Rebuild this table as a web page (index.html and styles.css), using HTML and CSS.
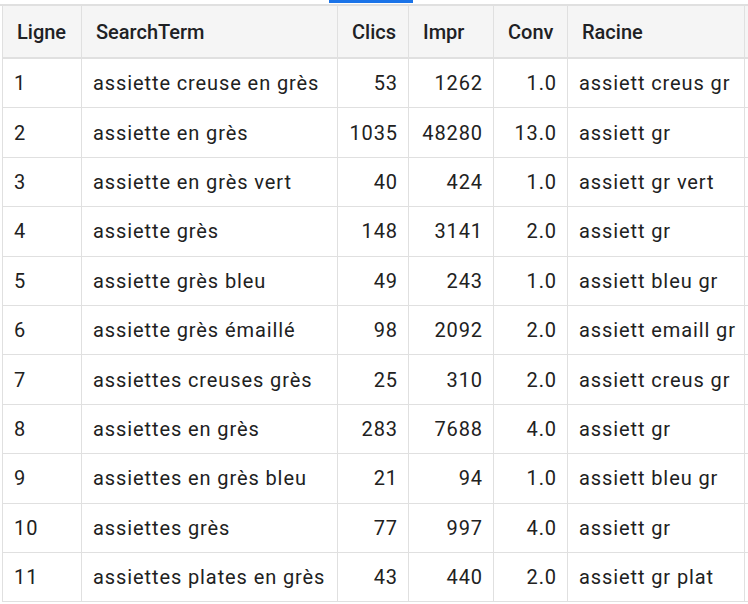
FILE: index.html
```html
<!DOCTYPE html>
<html lang="fr">
<head>
<meta charset="utf-8">
<link rel="stylesheet" href="styles.css">
</head>
<body>
<div class="tabs">
  <div class="tab-indicator"></div>
</div>
<div class="tabline"></div>
<table class="grid">
  <colgroup>
    <col class="c-ligne"><col class="c-term"><col class="c-clics"><col class="c-impr"><col class="c-conv"><col class="c-racine"><col class="c-extra">
  </colgroup>
  <thead>
    <tr><th>Ligne</th><th>SearchTerm</th><th>Clics</th><th>Impr</th><th>Conv</th><th>Racine</th><th></th></tr>
  </thead>
  <tbody>
    <tr><td>1</td><td>assiette creuse en grès</td><td class="num">53</td><td class="num">1262</td><td class="num">1.0</td><td>assiett creus gr</td><td></td></tr>
    <tr><td>2</td><td>assiette en grès</td><td class="num">1035</td><td class="num">48280</td><td class="num">13.0</td><td>assiett gr</td><td></td></tr>
    <tr><td>3</td><td>assiette en grès vert</td><td class="num">40</td><td class="num">424</td><td class="num">1.0</td><td>assiett gr vert</td><td></td></tr>
    <tr><td>4</td><td>assiette grès</td><td class="num">148</td><td class="num">3141</td><td class="num">2.0</td><td>assiett gr</td><td></td></tr>
    <tr><td>5</td><td>assiette grès bleu</td><td class="num">49</td><td class="num">243</td><td class="num">1.0</td><td>assiett bleu gr</td><td></td></tr>
    <tr><td>6</td><td>assiette grès émaillé</td><td class="num">98</td><td class="num">2092</td><td class="num">2.0</td><td>assiett emaill gr</td><td></td></tr>
    <tr><td>7</td><td>assiettes creuses grès</td><td class="num">25</td><td class="num">310</td><td class="num">2.0</td><td>assiett creus gr</td><td></td></tr>
    <tr><td>8</td><td>assiettes en grès</td><td class="num">283</td><td class="num">7688</td><td class="num">4.0</td><td>assiett gr</td><td></td></tr>
    <tr><td>9</td><td>assiettes en grès bleu</td><td class="num">21</td><td class="num">94</td><td class="num">1.0</td><td>assiett bleu gr</td><td></td></tr>
    <tr><td>10</td><td>assiettes grès</td><td class="num">77</td><td class="num">997</td><td class="num">4.0</td><td>assiett gr</td><td></td></tr>
    <tr><td>11</td><td>assiettes plates en grès</td><td class="num">43</td><td class="num">440</td><td class="num">2.0</td><td>assiett gr plat</td><td></td></tr>
  </tbody>
</table>
</body>
</html>
```
FILE: styles.css
```css
html, body {
  margin: 0;
  padding: 0;
  background: #ffffff;
  overflow: hidden;
}
body {
  font-family: Roboto, "Liberation Sans", Arial, sans-serif;
  color: #212121;
  width: 748px;
  height: 604px;
}
.tabs {
  height: 4px;
  display: flex;
}
.tab-indicator {
  margin-left: 329px;
  width: 84px;
  height: 3px;
  background: #1a73e8;
}
.tabline {
  height: 2px;
  background: #e0e0e0;
}
.grid {
  margin-left: 2px;
  border-collapse: collapse;
  table-layout: fixed;
  width: 800px;
  font-size: 20px;
}
.c-ligne { width: 79px; }
.c-term { width: 256px; }
.c-clics { width: 71px; }
.c-impr { width: 85px; }
.c-conv { width: 74px; }
.c-racine { width: 177px; }
.c-extra { width: 58px; }
.grid th {
  background: #f5f5f5;
  font-weight: 500;
  text-align: left;
  color: #202124;
  height: 51px;
  padding: 0 13px 0 14px;
  border-bottom: 2px solid #e0e0e0;
  border-left: 1px solid #e0e0e0;
  white-space: nowrap;
}
.grid th:first-child {
  padding-left: 14px;
}
.grid td {
  height: 48.4px;
  padding: 0 11px;
  border: 1px solid #e0e0e0;
  white-space: nowrap;
  letter-spacing: 0.9px;
}
.grid td.num {
  text-align: right;
  padding-right: 10px;
}
```
